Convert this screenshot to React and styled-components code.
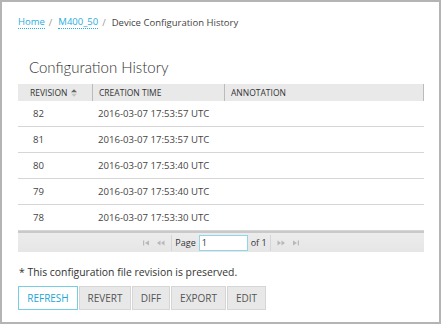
import React from "react";
import styled, { createGlobalStyle } from "styled-components";

const Global = createGlobalStyle`
  html, body { margin: 0; padding: 0; background: #fff; }
  body { font-family: "Open Sans", "Liberation Sans", sans-serif; color: #333; }
`;

const Frame = styled.div`
  box-sizing: border-box;
  width: 441px;
  height: 324px;
  border: 2px solid #b4b4b4;
  padding: 11px 17px 0 16px;
  display: flex;
  flex-direction: column;
`;

const Crumbs = styled.nav`
  display: flex;
  align-items: center;
  font-size: 9.5px;
  height: 18px;
  color: #444;
`;

const CrumbLink = styled.a`
  color: #2aaee0;
  text-decoration: none;
  border-bottom: 1px dotted #2aaee0;
  line-height: 12px;
`;

const Sep = styled.span`
  color: #999;
  margin: 0 6px 0 4px;
`;

const Title = styled.h1`
  margin: 26px 0 0 11px;
  font-family: "Lato", "Open Sans", sans-serif;
  font-weight: 300;
  font-size: 15px;
  color: #333;
  line-height: 20px;
  height: 27px;
`;

const Table = styled.div`
  display: flex;
  flex-direction: column;
  width: 406px;
`;

const HeadRow = styled.div`
  display: grid;
  grid-template-columns: 74px 132px 1fr;
  height: 17px;
  background: #e9e9e9;
  border-right: 1px solid #bbb;
`;

const HeadCell = styled.div`
  display: flex;
  align-items: center;
  padding-left: ${(p) => p.$pad || 6}px;
  font-size: 8.5px;
  color: #333;
  border-left: ${(p) => (p.$first ? "none" : "1px solid #bbb")};
  gap: 4px;
`;

const Row = styled.div`
  box-sizing: border-box;
  display: grid;
  grid-template-columns: 74px 132px 1fr;
  height: 26px;
  border-bottom: 1px solid #d6d6d6;
  &:last-child { border-bottom: none; }
`;

const Cell = styled.div`
  display: flex;
  align-items: center;
  padding-left: ${(p) => p.$pad || 6}px;
  font-size: 9.6px;
  color: #444;
`;

const Pager = styled.div`
  height: 19px;
  background: linear-gradient(#ececec, #e6e6e6);
  border-top: 2px solid #c9c9c9;
  display: flex;
  align-items: center;
  justify-content: center;
  font-size: 9px;
  color: #333;
`;

const PagerBtn = styled.span`
  display: inline-flex;
  align-items: center;
  margin: 0 3px;
`;

const PagerSep = styled.span`
  width: 1px;
  height: 16px;
  background: #d6d6d6;
  margin: 0 3px;
`;

const PageInput = styled.input`
  box-sizing: border-box;
  width: 49px;
  height: 16px;
  border: 1px solid #8fd6e8;
  margin: 0 3px 0 3px;
  padding: 0 2px;
  font-family: inherit;
  font-size: 9px;
  color: #333;
  background: #fff;
  outline: none;
`;

const Note = styled.p`
  margin: 14px 0 0 1px;
  font-size: 10.4px;
  color: #333;
  line-height: 13px;
`;

const Buttons = styled.div`
  display: flex;
  margin: 7px 0 0 0;
  gap: 1px;
`;

const Btn = styled.button`
  box-sizing: border-box;
  height: 24px;
  width: ${(p) => p.$w}px;
  padding: 0;
  font-family: inherit;
  font-size: 10px;
  background: ${(p) => (p.$primary ? "#fff" : "#e8e8e8")};
  color: ${(p) => (p.$primary ? "#23a6d5" : "#555")};
  border: 1px solid ${(p) => (p.$primary ? "#74cfe2" : "#d6d6d6")};
  cursor: pointer;
`;

const SortIcon = () => (
  <svg width="6" height="8" viewBox="0 0 6 8">
    <path d="M0 3.3 L3 0.3 L6 3.3 Z" fill="#666" />
    <path d="M0 4.7 L3 7.7 L6 4.7 Z" fill="#c4c4c4" />
  </svg>
);

const ArrowIcon = ({ dir, bar }) => (
  <svg width="8" height="6" viewBox="0 0 8 6" style={{ transform: dir === "right" ? "scaleX(-1)" : undefined }}>
    {bar ? (
      <>
        <rect x="0" y="0.5" width="1.2" height="5" fill="#b8b8b8" />
        <path d="M2 3 L6 0.5 L6 5.5 Z" fill="#b8b8b8" />
      </>
    ) : (
      <>
        <path d="M0 3 L3.5 0.5 L3.5 5.5 Z" fill="#b8b8b8" />
        <path d="M4 3 L7.5 0.5 L7.5 5.5 Z" fill="#b8b8b8" />
      </>
    )}
  </svg>
);

const rows = [
  ["82", "2016-03-07 17:53:57 UTC"],
  ["81", "2016-03-07 17:53:57 UTC"],
  ["80", "2016-03-07 17:53:40 UTC"],
  ["79", "2016-03-07 17:53:40 UTC"],
  ["78", "2016-03-07 17:53:30 UTC"],
];

export default function App() {
  return (
    <>
      <Global />
      <Frame>
        <Crumbs>
          <CrumbLink href="#">Home</CrumbLink>
          <Sep>/</Sep>
          <CrumbLink href="#">M400_50</CrumbLink>
          <Sep>/</Sep>
          <span>Device Configuration History</span>
        </Crumbs>
        <Title>Configuration History</Title>
        <Table>
          <HeadRow>
            <HeadCell $first $pad={12}>
              REVISION <SortIcon />
            </HeadCell>
            <HeadCell>CREATION TIME</HeadCell>
            <HeadCell>ANNOTATION</HeadCell>
          </HeadRow>
          {rows.map(([rev, time]) => (
            <Row key={rev}>
              <Cell $pad={15}>{rev}</Cell>
              <Cell $pad={6}>{time}</Cell>
              <Cell />
            </Row>
          ))}
          <Pager>
            <PagerBtn><ArrowIcon bar /></PagerBtn>
            <PagerBtn><ArrowIcon /></PagerBtn>
            <PagerSep />
            Page
            <PageInput defaultValue="1" />
            of 1
            <PagerSep />
            <PagerBtn><ArrowIcon dir="right" /></PagerBtn>
            <PagerBtn><ArrowIcon dir="right" bar /></PagerBtn>
          </Pager>
        </Table>
        <Note>* This configuration file revision is preserved.</Note>
        <Buttons>
          <Btn $primary $w={60}>REFRESH</Btn>
          <Btn $w={52}>REVERT</Btn>
          <Btn $w={38}>DIFF</Btn>
          <Btn $w={55}>EXPORT</Btn>
          <Btn $w={39}>EDIT</Btn>
        </Buttons>
      </Frame>
    </>
  );
}
